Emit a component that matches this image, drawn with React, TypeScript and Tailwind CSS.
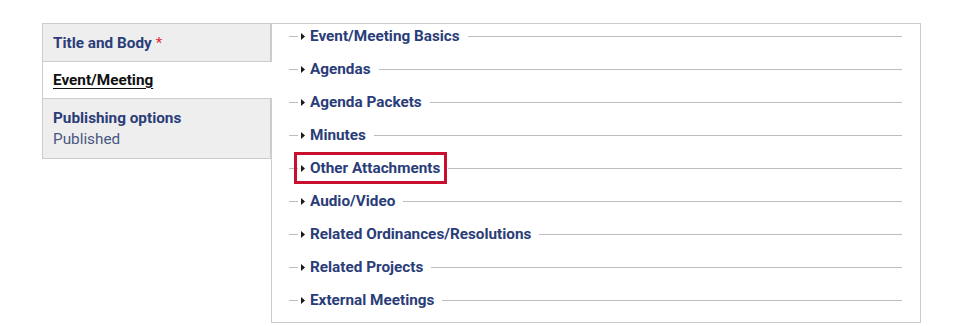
import React from "react"

const sections = [
  "Event/Meeting Basics",
  "Agendas",
  "Agenda Packets",
  "Minutes",
  "Other Attachments",
  "Audio/Video",
  "Related Ordinances/Resolutions",
  "Related Projects",
  "External Meetings",
]

function Caret() {
  return (
    <svg width="4" height="7" viewBox="0 0 4 7" className="shrink-0">
      <path d="M0 0 L4 3.5 L0 7 Z" fill="#1a1a1a" />
    </svg>
  )
}

function SectionRow({ label, highlighted }: { label: string; highlighted?: boolean }) {
  return (
    <div className="flex items-center h-[22px]">
      <span className="w-[9px] h-px bg-[#bdbdbd] shrink-0" />
      <span
        className={
          highlighted
            ? "flex items-center gap-[5px] ml-[3px] outline-[3px] outline-solid outline-[#c8102e] outline-offset-[4px]"
            : "flex items-center gap-[5px] ml-[3px]"
        }
      >
        <Caret />
        <span className="text-[15.3px] font-bold text-[#2b3d78] leading-[18px] whitespace-nowrap">{label}</span>
      </span>
      <span className="flex-1 h-px bg-[#bdbdbd] ml-[8px]" />
    </div>
  )
}

export default function App() {
  return (
    <div className="min-h-[326px] bg-white pt-[23px] pl-[42px] font-['Roboto',sans-serif]">
      <div className="flex items-start">
        <div className="w-[229px] shrink-0">
          <div className="bg-[#eeeeee] border border-[#cccccc] h-[39px] flex items-center px-[10px] pt-[2px]">
            <span className="text-[15.3px] font-bold text-[#2b3d78]">Title and Body</span>
            <span className="text-[15px] text-[#e32b3e] ml-[4px]">*</span>
          </div>
          <div className="relative z-10 bg-white border-l border-[#cccccc] -mr-px h-[36px] flex items-center px-[10px]">
            <span className="text-[15.3px] font-bold text-[#111111] underline underline-offset-[3px]">Event/Meeting</span>
          </div>
          <div className="bg-[#eeeeee] border border-[#cccccc] px-[10px] pt-[9px] pb-[8px]">
            <div className="text-[15.3px] font-bold text-[#2b3d78] leading-[21px]">Publishing options</div>
            <div className="text-[15.3px] text-[#4a5780] leading-[21px]">Published</div>
          </div>
        </div>
        <div className="w-[650px] h-[300px] border border-[#cccccc] bg-white pt-px pl-[17px] pr-[18px] flex flex-col gap-[11px]">
          {sections.map((s) => (
            <SectionRow key={s} label={s} highlighted={s === "Other Attachments"} />
          ))}
        </div>
      </div>
    </div>
  )
}
